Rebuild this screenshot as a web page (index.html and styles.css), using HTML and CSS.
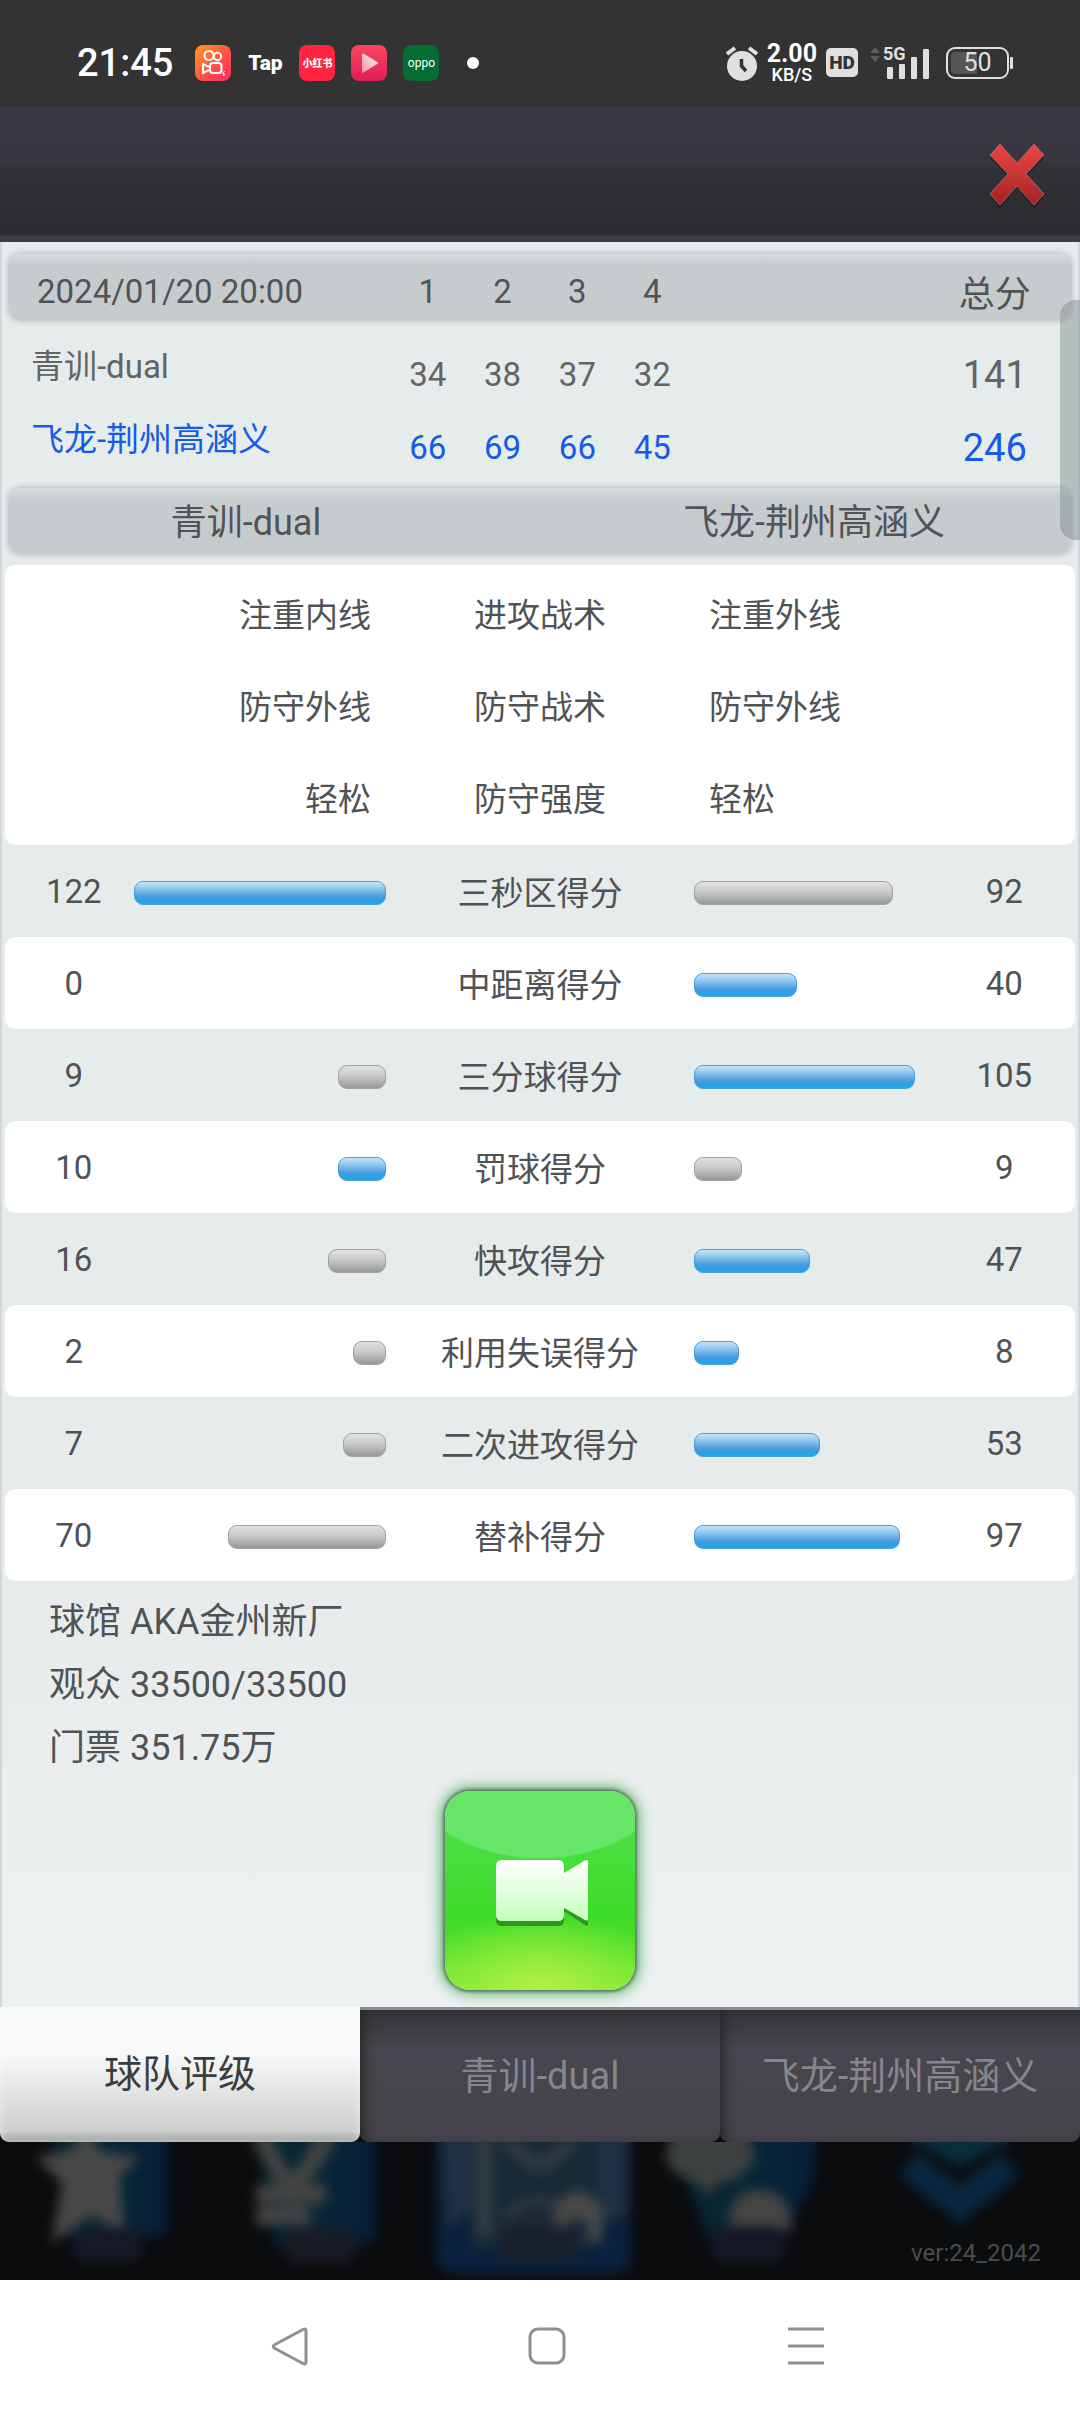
FILE: index.html
```html
<!DOCTYPE html>
<html lang="zh-CN">
<head>
	<meta charset="utf-8">
	<meta name="viewport" content="width=device-width, initial-scale=1">
	<title>比赛数据</title>
	<link rel="stylesheet" href="styles.css">
</head>
<body>
	<!-- 状态栏 -->
	<div class="status">
		<span class="time">21:45</span>
		<div class="apps">
			<svg width="36" height="36" viewBox="0 0 36 36">
				<defs><linearGradient id="ks" x1="0" y1="0" x2="1" y2="1"><stop offset="0" stop-color="#ff9a1f"/><stop offset=".55" stop-color="#ff5346"/><stop offset="1" stop-color="#fa2a60"/></linearGradient></defs>
				<rect width="36" height="36" rx="8" fill="url(#ks)"/>
				<g fill="none" stroke="#fff" stroke-width="2"><circle cx="14" cy="10.500" r="4.600"/><circle cx="22.500" cy="11.500" r="3.700"/><rect x="15" y="18" width="11.500" height="10" rx="3"/><path d="M14 22l-6-3v9l6-3"/></g>
				<path d="M29.500 26l-2 3h2l-1 2" fill="none" stroke="#fff"/>
			</svg>
			<span class="tap">Tap</span>
			<span class="app red">小红书</span>
			<svg width="36" height="36" viewBox="0 0 36 36">
				<defs><linearGradient id="vd" x1="0" y1="0" x2="0" y2="1"><stop offset="0" stop-color="#fb4760"/><stop offset="1" stop-color="#dc1f55"/></linearGradient><linearGradient id="vp" x1="0" y1="1" x2="1" y2="0"><stop offset="0" stop-color="#f5899f"/><stop offset="1" stop-color="#fff"/></linearGradient></defs>
				<rect width="36" height="36" rx="8" fill="url(#vd)"/>
				<path d="M11 10v17q0 1.500 1.500.6l14.500-9q1-.6 0-1.200L12.500 8.600Q11 8 11 10z" fill="url(#vp)"/>
			</svg>
			<span class="app green">oppo</span>
		</div>
		<span class="dot"></span>
		<div class="signs">
			<svg width="32" height="36" viewBox="0 0 32 36">
				<circle cx="16" cy="21" r="15" fill="#e0e0e0"/>
				<path d="M1 9l8-6M31 9l-8-6" stroke="#e0e0e0" stroke-width="4"/>
				<path d="M15.500 14v7l4.500 5" fill="none" stroke="#333" stroke-width="3.500"/>
			</svg>
			<span class="speed"><b>2.00</b><i>KB/S</i></span>
			<span class="hd">HD</span>
			<div class="signal">
				<span>5G</span>
				<svg width="62" height="34" viewBox="0 0 62 34">
					<path d="M1 7l5-6 5 6zM1 10h10l-5 6z" fill="#5c5c5c"/>
					<g fill="#e0e0e0"><rect x="18" y="21" width="6" height="12" rx="1"/><rect x="30" y="18" width="6" height="15" rx="1"/><rect x="42" y="11" width="6" height="22" rx="1"/><rect x="54" y="3" width="6" height="30" rx="1"/></g>
				</svg>
			</div>
			<span class="battery">50</span>
		</div>
	</div>

	<header class="top">
		<button class="close" type="button" aria-label="关闭">
			<svg width="58" height="66" viewBox="0 0 58 66">
				<defs><linearGradient id="cx" x1="0" y1="0" x2="0" y2="1"><stop offset="0" stop-color="#ec4644"/><stop offset=".5" stop-color="#c93533"/><stop offset="1" stop-color="#a02324"/></linearGradient></defs>
				<path d="M12 5l17 20L46 5l10 11-18 18 18 20-10 12-17-20-17 20L2 54l18-20L2 16z" fill="#221f23"/>
				<path d="M12 2l17 19L46 2l10 11-18 19 18 20-10 11-17-19-17 19L2 52l18-20L2 13z" fill="url(#cx)" stroke="#a8605f" stroke-width="1"/>
			</svg>
		</button>
	</header>

	<main class="panel">
		<!-- 每节比分 -->
		<table class="score">
			<thead>
				<tr><th class="date">2024/01/20 20:00</th><th>1</th><th>2</th><th>3</th><th>4</th><th class="total">总分</th></tr>
			</thead>
			<tbody>
				<tr><td class="name">青训-dual</td><td>34</td><td>38</td><td>37</td><td>32</td><td class="total">141</td></tr>
				<tr class="mine"><td class="name">飞龙-荆州高涵义</td><td>66</td><td>69</td><td>66</td><td>45</td><td class="total">246</td></tr>
			</tbody>
		</table>

		<!-- 战术对比 -->
		<table class="tactics">
			<thead>
				<tr><th>青训-dual</th><th>飞龙-荆州高涵义</th></tr>
			</thead>
			<tbody>
				<tr><td>注重内线</td><td>进攻战术</td><td>注重外线</td></tr>
				<tr><td>防守外线</td><td>防守战术</td><td>防守外线</td></tr>
				<tr><td>轻松</td><td>防守强度</td><td>轻松</td></tr>
			</tbody>
		</table>

		<!-- 得分对比，bar的宽度由得分算出 -->
		<table class="stats">
			<tbody>
				<tr><td>122</td><td><div class="bar win" style="width:100%"></div></td><td>三秒区得分</td><td><div class="bar" style="width:79%"></div></td><td>92</td></tr>
				<tr><td>0</td><td></td><td>中距离得分</td><td><div class="bar win" style="width:41%"></div></td><td>40</td></tr>
				<tr><td>9</td><td><div class="bar" style="width:19%"></div></td><td>三分球得分</td><td><div class="bar win" style="width:88%"></div></td><td>105</td></tr>
				<tr><td>10</td><td><div class="bar win" style="width:19%"></div></td><td>罚球得分</td><td><div class="bar" style="width:19%"></div></td><td>9</td></tr>
				<tr><td>16</td><td><div class="bar" style="width:23%"></div></td><td>快攻得分</td><td><div class="bar win" style="width:46%"></div></td><td>47</td></tr>
				<tr><td>2</td><td><div class="bar" style="width:13%"></div></td><td>利用失误得分</td><td><div class="bar win" style="width:18%"></div></td><td>8</td></tr>
				<tr><td>7</td><td><div class="bar" style="width:17%"></div></td><td>二次进攻得分</td><td><div class="bar win" style="width:50%"></div></td><td>53</td></tr>
				<tr><td>70</td><td><div class="bar" style="width:63%"></div></td><td>替补得分</td><td><div class="bar win" style="width:82%"></div></td><td>97</td></tr>
			</tbody>
		</table>

		<div class="info">
			<p>球馆 AKA金州新厂</p>
			<p>观众 33500/33500</p>
			<p>门票 351.75万</p>
		</div>

		<button class="video" type="button" aria-label="观看比赛">
			<svg width="96" height="68" viewBox="0 0 96 68">
				<defs><linearGradient id="cam" x1="0" y1="0" x2="0" y2="1"><stop offset="0" stop-color="#fff"/><stop offset="1" stop-color="#c5ffbd"/></linearGradient></defs>
				<path d="M8 5h56q6 0 6 6v50q0 6-6 6H8q-6 0-6-6V11q0-6 6-6zM70 17L91 5q3-1 3 2v58q0 3-3 1L70 52z" fill="#279a1c"/>
				<path d="M8 1h56q6 0 6 6v49q0 6-6 6H8q-6 0-6-6V7q0-6 6-6zM70 14L91 1.500q3-1.500 3 1.500v57q0 3-3 1L70 49z" fill="url(#cam)"/>
			</svg>
		</button>
		<div class="scroll"></div>
	</main>

	<div class="bottom">
		<nav class="tabs">
			<button class="tab on" type="button">球队评级</button>
			<button class="tab" type="button">青训-dual</button>
			<button class="tab" type="button">飞龙-荆州高涵义</button>
		</nav>
		<div class="menu">
			<svg viewBox="0 0 1080 138" preserveAspectRatio="none">
				<defs>
					<filter id="soft" x="-10%" y="-20%" width="120%" height="140%" color-interpolation-filters="sRGB"><feGaussianBlur stdDeviation="6"/></filter>
					<linearGradient id="tile" x1="0" y1="0" x2="1" y2="0"><stop offset="0" stop-color="#03282f"/><stop offset=".5" stop-color="#062b3c"/><stop offset="1" stop-color="#07203f"/></linearGradient>
				</defs>
				<g filter="url(#soft)" opacity=".88">
					<path d="M50-10h118v98q0 6-6 6H70z" fill="url(#tile)"/>
					<path d="M86-12l16 22 38 5-20 20 4 58-32-20-40 28 10-60-26-26 34-6z" fill="#505050"/>
					<rect x="72" y="86" width="70" height="34" rx="14" fill="#171a29"/>
					<path d="M256-10h120v100q0 12-12 12h-90z" fill="url(#tile)"/>
					<path d="M260-5l32 56 36-56M256 52h70M256 74h54" fill="none" stroke="#4b4b4b" stroke-width="19"/>
					<rect x="284" y="86" width="72" height="34" rx="14" fill="#1b1d2a"/>
					<rect x="437" y="-20" width="194" height="152" rx="16" fill="#0a2544"/>
					<path d="M442-10h34v76l-30 20zM596-10h32v80l-32 16z" fill="#24364a"/>
					<rect x="472" y="-10" width="120" height="116" fill="#1a2e3c"/>
					<path d="M484-10v104" stroke="#38434a" stroke-width="16"/>
					<path d="M504-4q36 60 72 0M516 0q24 34 48 0M505 76q30-34 66 0" fill="none" stroke="#3b444a" stroke-width="7"/>
					<path d="M554 98V66q24-34 48 0v34h-14V78h-20v20z" fill="#50524f"/>
					<rect x="498" y="84" width="78" height="36" rx="12" fill="#1d2431"/>
					<path d="M670-10h146q6 64-40 104h-70z" fill="url(#tile)"/>
					<ellipse cx="710" cy="12" rx="44" ry="30" fill="#454848"/><path d="M690 34l18 20 16-22z" fill="#454848"/>
					<path d="M728 88q0-40 32-40t32 40z" fill="#4c4d4b"/>
					<rect x="710" y="84" width="76" height="36" rx="14" fill="#171a28"/>
					<path d="M914-16l46 26 46-26" fill="none" stroke="#093446" stroke-width="26"/>
					<path d="M908 22l52 40 50-40" fill="none" stroke="#082b47" stroke-width="30"/>
				</g>
			</svg>
			<span class="ver">ver:24_2042</span>
		</div>
	</div>

	<!-- 系统导航 -->
	<nav class="keys">
		<button type="button" aria-label="返回"><svg width="40" height="40" viewBox="0 0 40 40"><path d="M34 3.500q3-1.500 3 1.500v31q0 3-3 1.500L6 22.500q-3.500-2 0-4z"/></svg></button>
		<button type="button" aria-label="主页"><svg width="40" height="40" viewBox="0 0 40 40"><rect x="3" y="3" width="34" height="34" rx="8"/></svg></button>
		<button type="button" aria-label="最近任务"><svg width="40" height="40" viewBox="0 0 40 40"><path d="M2 3h36M2 20h36M2 37h36"/></svg></button>
	</nav>
</body>
</html>
```
FILE: styles.css
```css
*{box-sizing: border-box;margin: 0;padding: 0;}
body{background: #ffffff;font-family: Roboto,"Noto Sans CJK SC",sans-serif;font-size: 33px;color: #505355;}
button{border: 0;background: none;font: inherit;color: inherit;cursor: pointer;}
svg{display: block;}
table,thead,tbody{display: block;}
th{font-weight: normal;}

/* 状态栏 */
.status{height: 107px;padding: 18px 71px 0 77px;background: #333333;color: #ffffff;display: flex;align-items: center;}
.time{font-size: 38px;font-weight: 500;}
.apps{display: flex;align-items: center;gap: 16px;margin-left: 22px;}
.tap{width: 36px;font-size: 21px;font-weight: 900;text-align: center;}
.app{width: 36px;height: 36px;border-radius: 8px;display: flex;align-items: center;justify-content: center;white-space: nowrap;}
.red{background: #ff2440;font-size: 10px;font-weight: 900;}
.green{background: #046e32;font-size: 12px;}
.dot{width: 12px;height: 12px;border-radius: 50%;background: #ffffff;margin-left: 28px;}
.signs{display: flex;align-items: center;margin-left: auto;gap: 9px;}
.speed{display: flex;flex-direction: column;align-items: center;}
.speed b{font-size: 25px;font-weight: bold;line-height: 24px;}
.speed i{font-size: 18px;font-style: normal;font-weight: 500;line-height: 18px;}
.hd{width: 32px;height: 29px;border-radius: 5px;background: #e0e0e0;color: #333333;font-size: 19px;font-weight: 900;line-height: 29px;text-align: center;}
.signal{position: relative;margin: 0 6px 0 2px;}
.signal span{position: absolute;left: 14px;top: -4px;color: #e0e0e0;font-size: 18px;font-weight: bold;line-height: 24px;}
.battery{width: 63px;height: 32px;border: 2px solid #e0e0e0;border-radius: 9px;box-shadow: inset 0 0 0 3px #333333;background: linear-gradient(90deg,#565656 50%,#333333 50%);color: #e0e0e0;font-size: 25px;line-height: 28px;text-align: center;position: relative;}
.battery:after{content: "";position: absolute;right: -6px;top: 8px;width: 3px;height: 12px;border-radius: 1px;background: #e0e0e0;}

.top{height: 135px;padding: 0 34px;background: linear-gradient(#3a3943,#37353f 40%,#323136 48%,#2b2b2f 94%,#3a3d41 96%);display: flex;align-items: center;justify-content: flex-end;}

/* 内容面板 */
.panel{position: relative;padding: 12px 3px 17px;background: linear-gradient(#e6ebec,#e7ebec 75%,#edf1f2);border-left: 2px solid #d2d7d9;border-right: 2px solid #d2d7d9;}
.score thead tr,.tactics thead tr{height: 66px;margin: 0 4px;border-radius: 12px;background: linear-gradient(#d8dde0,#c6cbce 16%);box-shadow: 0 0 6px #a5a9ab;color: #505457;align-items: center;}
.score tr{display: grid;grid-template-columns: 51fr repeat(4,10fr) 51fr;align-items: center;text-align: center;}
.score th{padding-top: 8px;}
.score tbody{padding: 18px 4px 4px;}
.score tbody tr{height: 73px;color: #626567;}
.score .name,.score .date{text-align: left;padding-left: 22px;}
.score .date{padding-left: 28px;}
.score .name{padding-bottom: 22px;}
.score .total{padding-left: 60%;font-size: 38px;}
.score th.total{font-size: 36px;}
.score tbody .mine{color: #155be8;}

.tactics thead tr{display: grid;grid-template-columns: 45fr 55fr;margin-bottom: 11px;font-size: 36px;}
.tactics thead th{padding: 0 4px 4px 0;}
.tactics thead th:last-child{padding-left: 74px;}
.tactics tbody{padding: 2px 0;border-radius: 10px;background: #ffffff;}
.tactics tbody tr{height: 92px;display: grid;grid-template-columns: 1fr 338px 1fr;align-items: center;text-align: center;}
.tactics td:first-child{text-align: right;}
.tactics td:last-child{text-align: left;}

.stats tr{height: 92px;border-radius: 10px;display: grid;grid-template-columns: 121fr 235fr 288fr 235fr 121fr;align-items: center;text-align: center;}
.stats tr:nth-child(even){background: #ffffff;}
.stats td:first-child{padding-left: 8px;}
.stats td:last-child{padding-right: 12px;}
.bar{height: 24px;margin-top: 3px;border: 1px solid #a0a1a2;border-radius: 9px;background: linear-gradient(#e2e2e2,#c9c9c9 45%,#979797);}
.stats td:nth-child(2) .bar{margin-left: auto;}
.bar.win{border-color: #4b9fd6;background: linear-gradient(#c5e6f9,#7fbcea 40%,#529bdb 65%,#2aa2e6 80%);}

.info{padding: 10px 44px 0;font-size: 36px;line-height: 63px;}
.video{width: 190px;height: 199px;padding: 4px 0 0 4px;margin: 11px auto 0;border-radius: 25px;display: flex;align-items: center;justify-content: center;background: radial-gradient(ellipse 150px 119px at 50% -51px,#66e569 99%,transparent 100%),radial-gradient(ellipse 70% 40% at 50% 100%,#b3f046,transparent),linear-gradient(#4fe14e,#3edb28 65%,#74ea30);box-shadow: 0 0 3px 2px #637d66,0 0 14px 4px #62b574;}
/* 右侧滚动条 */
.scroll{position: absolute;right: -2px;top: 58px;width: 20px;height: 240px;border-radius: 16px 0 0 16px;background: rgba(125,137,135,0.45);}

.bottom{background: #0b0c0e;}
.tabs{display: grid;grid-template-columns: repeat(3,1fr);background: linear-gradient(#edf1f2 2px,#0b0c0e 3px);}
.tab{height: 135px;padding-bottom: 8px;border-radius: 0 0 9px 9px;border-top: 3px solid #8b8d90;background: linear-gradient(#343338,#48464e 30%,#454349);box-shadow: inset 10px 0 12px -6px #29282c;color: #85858b;font-size: 38px;white-space: nowrap;}
.tab.on{border-top: 0;background: linear-gradient(#f6f9f8 35%,#cdcfce 92%,#a3a6a5 98%);box-shadow: inset 0 0 10px rgba(255,255,255,0.5);color: #3b3d3d;}
.menu{position: relative;overflow: hidden;}
.menu svg{width: 100%;height: 138px;}
.ver{position: absolute;right: 39px;bottom: 11px;font-size: 24px;line-height: 32px;color: #4b4c4e;}

.keys{height: 132px;padding: 0 145px 0 160px;background: #ffffff;display: grid;grid-template-columns: repeat(3,1fr);align-items: center;}
.keys button{justify-self: center;}
.keys svg{fill: none;stroke: #8f8f8f;stroke-width: 3;}
```
